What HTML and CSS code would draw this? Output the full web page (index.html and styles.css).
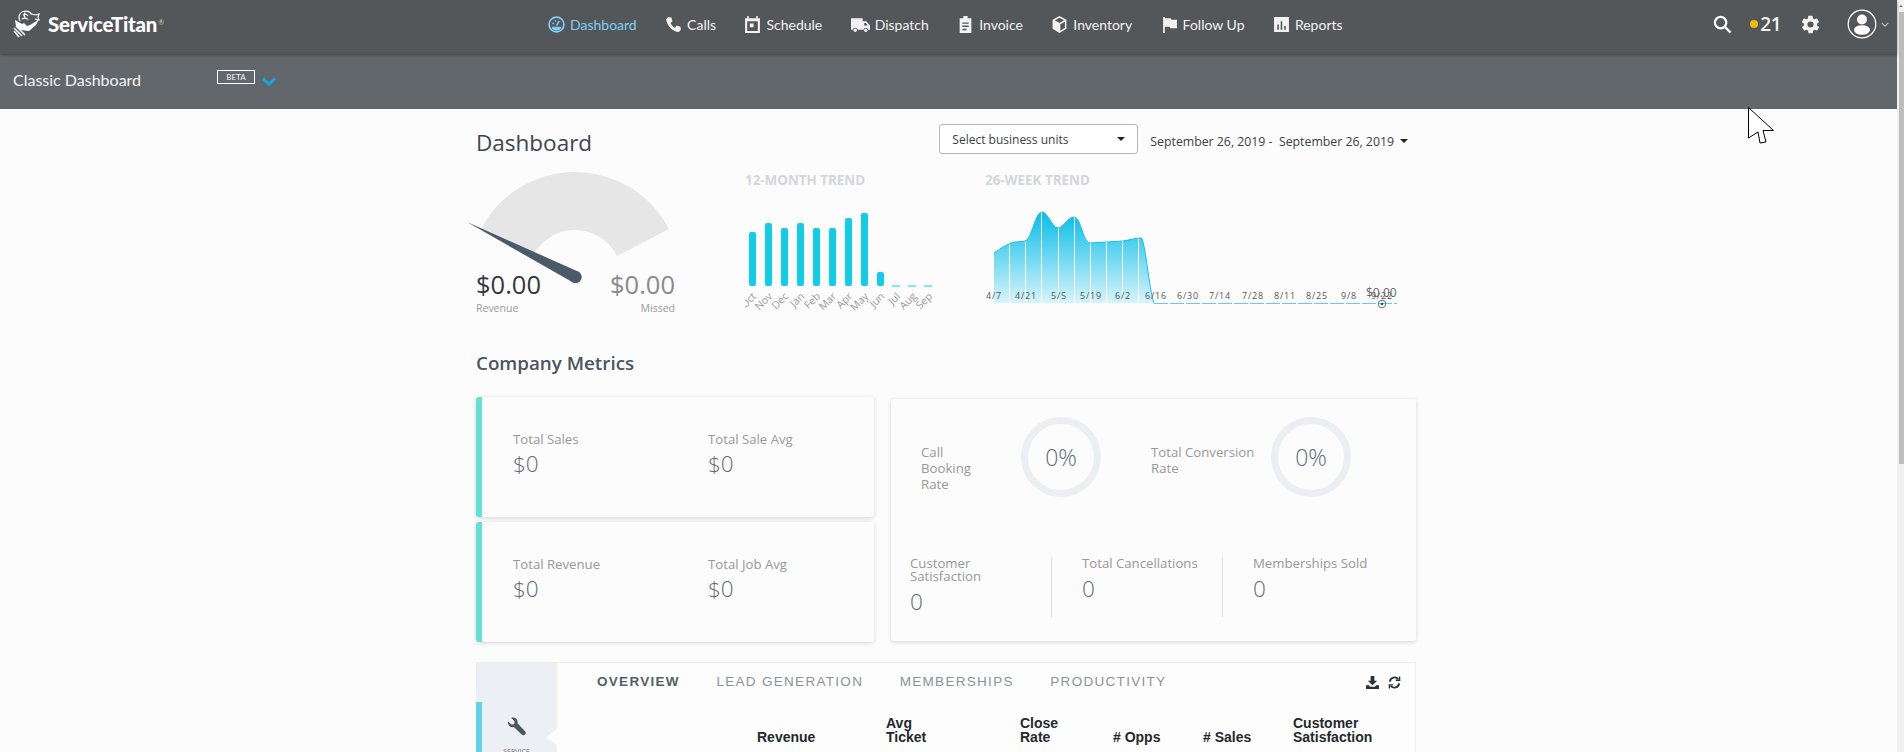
FILE: index.html
```html
<!DOCTYPE html>
<html lang="en">
<head>
<meta charset="utf-8">
<title>Dashboard</title>
<link rel="stylesheet" href="styles.css">
</head>
<body>
<div class="page">
  <header class="topbar">
    <a class="brand">
      <svg class="brand-mark" viewBox="0 0 28 28" fill="none" stroke="#fff" stroke-width="1.200">
        <path d="M7 11C5 7 6 3 10 1.500c4-1 7 0 8.500 3"/>
        <path d="M10 5c2-1 4-1 5 1M9 9c2-1.500 5-1 6 1M12 2.500c-1 2-1 4 0 5"/>
        <path d="M18 4l5 1 3-1-1 3 1 3-4-1"/>
        <path d="M2 10l1 6 5 4 8 1 7-6 3-6-4 3-5 3-3 1-3-3-2 1z" fill="#fff" stroke="none"/>
        <path d="M1 18l8 8M1 21l5 6M3 16l9 9" stroke-width="1.500"/>
      </svg>
      <span class="brand-name">ServiceTitan</span><span class="brand-reg">®</span>
    </a>
    <nav class="nav">
      <a class="nav-item active"><svg class="ico" viewBox="0 0 16 16"><circle cx="8" cy="8" r="7" fill="none" stroke="currentColor" stroke-width="1.600"/><path d="M3.500 11.500A5.500 5.500 0 0 0 12.500 11.500L12 10H4z" fill="currentColor"/><path d="M8 9l2.500-4.500" stroke="currentColor" stroke-width="1.400"/><circle cx="4.800" cy="7" r=".8" fill="currentColor"/><circle cx="7" cy="4.500" r=".8" fill="currentColor"/></svg>Dashboard</a>
      <a class="nav-item"><svg class="ico" viewBox="0 0 16 16"><path d="M3 1l3 .5 1 3.500-1.700 1.500c.8 2 2.200 3.500 4.200 4.500L11 9l3.500 1 .5 3-2 2C7 15 1.500 8.500 1 3z" fill="currentColor"/></svg>Calls</a>
      <a class="nav-item"><svg class="ico" viewBox="0 0 16 16"><path fill-rule="evenodd" d="M3 0h1.500v2h7V0H13v2h2v14H1V2h2zM3 5v9h10V5zM5.500 7h3.500v3.500H5.500z" fill="currentColor"/></svg>Schedule</a>
      <a class="nav-item"><svg class="ico ico-wide" viewBox="0 0 18 16"><path fill-rule="evenodd" d="M0 2h11v3h3.500L18 9v4h-1.700a2.300 2.300 0 0 0-4.500 0H6.200a2.300 2.300 0 0 0-4.500 0H0zM12.500 6.500V9h3.500l-2-2.500z" fill="currentColor"/><circle cx="4" cy="13.500" r="1.600" fill="currentColor"/><circle cx="14" cy="13.500" r="1.600" fill="currentColor"/></svg>Dispatch</a>
      <a class="nav-item"><svg class="ico" viewBox="0 0 16 16"><path fill-rule="evenodd" d="M6 0h4v2h3.500v14h-11V2H6zM5 6v1.300h6V6zM5 9v1.300h6V9zM5 12v1.300h4V12z" fill="currentColor"/></svg>Invoice</a>
      <a class="nav-item"><svg class="ico" viewBox="0 0 16 16"><path fill-rule="evenodd" d="M8 0l6.500 3.500v8.500L8 16l-6.500-4V3.500zM8 1.700L3.700 4 8 6.500 12.300 4zM8.800 7.800v6l4.300-2.700V5.300z" fill="currentColor"/></svg>Inventory</a>
      <a class="nav-item"><svg class="ico" viewBox="0 0 16 16"><path d="M2 1h1.600v1H9l1 1.500h5v8H9l-1-1.500H3.600V16H2z" fill="currentColor"/></svg>Follow Up</a>
      <a class="nav-item"><svg class="ico" viewBox="0 0 16 16"><path fill-rule="evenodd" d="M1 1h14v14H1zM4 8v5h1.500V8zM7.200 5v8h1.500V5zM10.500 9.500V13H12V9.500z" fill="currentColor"/></svg>Reports</a>
    </nav>
    <div class="tools">
      <svg class="tool-search" viewBox="0 0 20 20" fill="none" stroke="#fff" stroke-width="2.400"><circle cx="8" cy="8" r="6"/><path d="M12.500 12.500L18.500 18.500"/></svg>
      <span class="badge"><i class="badge-dot"></i>21</span>
      <svg class="tool-gear" viewBox="0 0 24 24"><path fill="#f2f2f2" d="M19.400 13c.1-.3.100-.7.100-1s0-.7-.1-1l2.100-1.600c.2-.2.200-.4.100-.6l-2-3.500c-.1-.2-.4-.3-.6-.2l-2.500 1c-.5-.4-1.100-.7-1.700-1l-.4-2.600c0-.3-.2-.5-.5-.5h-4c-.3 0-.5.200-.5.500l-.4 2.600c-.6.300-1.200.6-1.700 1l-2.500-1c-.2-.1-.5 0-.6.200l-2 3.500c-.1.200-.1.400.1.600L4.600 11c-.1.300-.1.700-.1 1s0 .7.1 1l-2.100 1.600c-.2.200-.2.400-.1.600l2 3.500c.1.200.4.300.6.200l2.500-1c.5.400 1.100.7 1.700 1l.4 2.600c0 .3.200.5.500.5h4c.3 0 .5-.2.500-.5l.4-2.600c.6-.3 1.200-.6 1.700-1l2.500 1c.2.100.5 0 .6-.2l2-3.500c.1-.2.100-.4-.1-.6zM12 15.500a3.500 3.500 0 1 1 0-7 3.500 3.500 0 0 1 0 7z"/></svg>
      <svg class="tool-avatar" viewBox="0 0 30 30"><circle cx="15" cy="15" r="13.800" fill="none" stroke="#fff" stroke-width="1.200"/><circle cx="15" cy="10.500" r="5" fill="#fff"/><ellipse cx="15" cy="21" rx="8" ry="4.800" fill="#fff"/></svg>
      <svg class="tool-caret" viewBox="0 0 10 6" fill="none" stroke="#b9bcbf" stroke-width="1.500"><path d="M1 1l4 4 4-4"/></svg>
    </div>
  </header>

  <div class="subbar">
    <span class="subbar-title">Classic Dashboard</span>
    <span class="beta">BETA</span>
    <svg class="subbar-chevron" viewBox="0 0 14 9" fill="none" stroke="#0aaee4" stroke-width="3"><path d="M1 1.500l6 5.500 6-5.500"/></svg>
  </div>

  <main class="content">
    <div class="title-row">
      <h1 class="title">Dashboard</h1>
      <div class="filters">
        <div class="select"><span>Select business units</span><i class="caret"></i></div>
        <div class="daterange"><span>September 26, 2019 -&nbsp; September 26, 2019</span><i class="caret"></i></div>
      </div>
    </div>

    <section class="overview">
      <div class="gauge">
        <svg class="gauge-svg" viewBox="465 165 214 125">
          <path d="M481 230A106 106 0 0 1 669 230L617 257A47 47 0 0 0 533 257Z" fill="#e6e6e6"/>
          <path d="M467 223L578 272.500A6 6 0 0 1 573 283.500Z" fill="#4b5a69"/>
          <circle cx="575.500" cy="278" r="6" fill="#4b5a69"/>
        </svg>
        <div class="gauge-values">
          <div class="gauge-value"><b>$0.00</b><small>Revenue</small></div>
          <div class="gauge-value missed"><b>$0.00</b><small>Missed</small></div>
        </div>
      </div>

      <div class="trend trend-month">
        <h3 class="trend-title">12-MONTH TREND</h3>
        <svg class="trend-svg month-svg" viewBox="745 196 200 124">
          <g fill="#12cde8">
            <rect x="749" y="232" width="7" height="54" rx="2"/>
            <rect x="765" y="223" width="7" height="63" rx="2"/>
            <rect x="781" y="228" width="7" height="58" rx="2"/>
            <rect x="797" y="223" width="7" height="63" rx="2"/>
            <rect x="813" y="228" width="7" height="58" rx="2"/>
            <rect x="829" y="228" width="7" height="58" rx="2"/>
            <rect x="845" y="218" width="7" height="68" rx="2"/>
            <rect x="861" y="213" width="7" height="73" rx="2"/>
            <rect x="877" y="272" width="7" height="14" rx="2"/>
            <rect x="892" y="285.500" width="8" height="1"/>
            <rect x="908" y="285.500" width="8" height="1"/>
            <rect x="924" y="285.500" width="8" height="1"/>
          </g>
          <g class="month-labels">
            <text transform="translate(757 297) rotate(-45)">Oct</text>
            <text transform="translate(773 297) rotate(-45)">Nov</text>
            <text transform="translate(789 297) rotate(-45)">Dec</text>
            <text transform="translate(805 297) rotate(-45)">Jan</text>
            <text transform="translate(821 297) rotate(-45)">Feb</text>
            <text transform="translate(837 297) rotate(-45)">Mar</text>
            <text transform="translate(853 297) rotate(-45)">Apr</text>
            <text transform="translate(869 297) rotate(-45)">May</text>
            <text transform="translate(885 297) rotate(-45)">Jun</text>
            <text transform="translate(901 297) rotate(-45)">Jul</text>
            <text transform="translate(917 297) rotate(-45)">Aug</text>
            <text transform="translate(933 297) rotate(-45)">Sep</text>
          </g>
        </svg>
      </div>

      <div class="trend trend-week">
        <h3 class="trend-title">26-WEEK TREND</h3>
        <svg class="trend-svg week-svg" viewBox="985 196 431 124">
          <defs>
            <linearGradient id="areaFill" x1="0" y1="0" x2="0" y2="1">
              <stop offset="0" stop-color="#08bde8"/>
              <stop offset="1" stop-color="#d6f4fb"/>
            </linearGradient>
          </defs>
          <path d="M994 253C1000 249 1004 246 1009 244C1015 241 1020 242 1025 241C1032 239 1035 212 1042 212C1048 212 1052 228 1058 228C1063 228 1068 217 1074 217C1081 217 1083 243 1090 243L1107 242L1123 241C1130 240 1135 238 1141 238C1145 238 1149 290 1154 303L994 303Z" fill="url(#areaFill)"/>
          <path d="M994 253C1000 249 1004 246 1009 244C1015 241 1020 242 1025 241C1032 239 1035 212 1042 212C1048 212 1052 228 1058 228C1063 228 1068 217 1074 217C1081 217 1083 243 1090 243L1107 242L1123 241C1130 240 1135 238 1141 238C1145 238 1149 290 1154 303" fill="none" stroke="#16bfe6" stroke-width="1"/>
          <path d="M1154 303.500H1397" fill="none" stroke="#5fd0ec" stroke-width="1" stroke-dasharray="14 2"/>
          <g stroke="#fff" stroke-width="1">
            <path d="M1009.500 244V303M1025.500 241V303M1041.500 212V303M1058.500 228V303M1074.500 217V303M1090.500 243V303M1106.500 242V303M1122.500 241V303M1138.500 238V303"/>
          </g>
          <g class="week-labels">
            <text x="994" y="299">4/7</text>
            <text x="1026" y="299">4/21</text>
            <text x="1059" y="299">5/5</text>
            <text x="1091" y="299">5/19</text>
            <text x="1123" y="299">6/2</text>
            <text x="1156" y="299">6/16</text>
            <text x="1188" y="299">6/30</text>
            <text x="1220" y="299">7/14</text>
            <text x="1253" y="299">7/28</text>
            <text x="1285" y="299">8/11</text>
            <text x="1317" y="299">8/25</text>
            <text x="1349" y="299">9/8</text>
            <text x="1382" y="299">9/22</text>
          </g>
          <text class="week-current" x="1366" y="297">$0.00</text>
          <circle cx="1382" cy="304" r="3.800" fill="none" stroke="#5e7180" stroke-width="1"/>
          <circle cx="1382" cy="304" r="1.200" fill="#33414c"/>
        </svg>
      </div>
    </section>

    <h2 class="section-title">Company Metrics</h2>

    <section class="metrics">
      <div class="metric-stack">
        <div class="card metric-card">
          <div class="metric"><span class="metric-label">Total Sales</span><span class="metric-value">$0</span></div>
          <div class="metric"><span class="metric-label">Total Sale Avg</span><span class="metric-value">$0</span></div>
        </div>
        <div class="card metric-card">
          <div class="metric"><span class="metric-label">Total Revenue</span><span class="metric-value">$0</span></div>
          <div class="metric"><span class="metric-label">Total Job Avg</span><span class="metric-value">$0</span></div>
        </div>
      </div>
      <div class="card rates-card">
        <div class="rates">
          <span class="metric-label rate-label rate-a">Call<br>Booking<br>Rate</span>
          <div class="ring">0%</div>
          <span class="metric-label rate-label rate-b">Total Conversion<br>Rate</span>
          <div class="ring">0%</div>
        </div>
        <div class="counts">
          <div class="count count-first"><span class="metric-label tight">Customer<br>Satisfaction</span><span class="metric-value">0</span></div>
          <div class="count"><span class="metric-label tight">Total Cancellations</span><span class="metric-value">0</span></div>
          <div class="count count-last"><span class="metric-label tight">Memberships Sold</span><span class="metric-value">0</span></div>
        </div>
      </div>
    </section>

    <section class="panel">
      <aside class="rail">
        <div class="rail-item">
          <svg class="rail-icon" viewBox="0 0 20 20"><path fill="#4a5662" d="M1 4.500L4.500 8l3-.5.5-3L4.500 1C7 0 10 1 11 4c.3 1 .2 2 0 2.700L19 15c1 1 1 2.500 0 3.500s-2.500 1-3.500 0L7.200 10.500C4 11.500.5 9 1 4.500z"/></svg>
          <span class="rail-label">SERVICE</span>
          <i class="rail-notch"></i>
        </div>
      </aside>
      <div class="panel-body">
        <div class="tab-row">
          <div class="tabs">
            <a class="tab on">OVERVIEW</a>
            <a class="tab">LEAD GENERATION</a>
            <a class="tab">MEMBERSHIPS</a>
            <a class="tab">PRODUCTIVITY</a>
          </div>
          <div class="tab-tools">
            <svg class="tab-tool" viewBox="0 0 14 14"><path fill="#2b3238" d="M5 0h4v5h3L7 10 2 5h3zM0 10h3l1.500 1.500h5L11 10h3v4H0z"/></svg>
            <svg class="tab-tool" viewBox="0 0 14 14" fill="none" stroke="#2b3238" stroke-width="2"><path d="M2 6a5 5 0 0 1 9-2.500M12 8a5 5 0 0 1-9 2.500"/><path d="M12.500 0.500v4h-4M1.500 13.500v-4h4" stroke-width="1.500"/></svg>
          </div>
        </div>
        <div class="thead">
          <span>Revenue</span>
          <span>Avg<br>Ticket</span>
          <span>Close<br>Rate</span>
          <span># Opps</span>
          <span># Sales</span>
          <span>Customer<br>Satisfaction</span>
        </div>
      </div>
    </section>
  </main>

  <div class="scrollbar"><i class="scrollbar-arrow"></i><i class="scrollbar-thumb"></i></div>
  <svg class="cursor" viewBox="0 0 28 38"><path d="M.5 .5V31L10 25 12 36 18 35 15 23.500H25.500Z" fill="#fff" stroke="#000" stroke-width="1"/></svg>
</div>
</body>
</html>
```

FILE: styles.css
```css
* { box-sizing: border-box; }
html, body { margin: 0; height: 100%; overflow: hidden; }
body { font-family: "Open Sans", "Liberation Sans", sans-serif; color: #333; background: #fcfcfd; }
.page { position: relative; width: 1904px; height: 752px; overflow: hidden; padding-right: 7px; }

/* top bar */
.topbar { height: 54px; background: #54575a; display: flex; align-items: center; padding: 0 0 6px 13px; position: relative; box-shadow: 0 1px 3px rgba(0,0,0,.35); z-index: 2; font-family: Lato, sans-serif; }
.brand { display: flex; align-items: center; width: 535px; color: #fff; }
.brand-mark { width: 28px; height: 28px; margin-right: 7px; }
.brand-name { font-weight: 900; font-size: 20.400px; letter-spacing: -.2px; }
.brand-reg { font-size: 7px; align-self: flex-start; margin: 8px 0 0 1px; color: #ccc; }
.nav { display: flex; align-items: center; gap: 28.400px; }
.nav-item { display: flex; align-items: center; gap: 5px; color: #f2f2f2; font-size: 14px; }
.nav-item.active { color: #7fd0f2; }
.ico { width: 17px; height: 17px; flex: none; }
.ico-wide { width: 19px; }
.tools { margin-left: auto; display: flex; align-items: center; padding-right: 8px; }
.tool-search { width: 19px; height: 19px; }
.badge { display: flex; align-items: center; margin-left: 18px; color: #f2f2f2; font: 600 19px "Open Sans", sans-serif; letter-spacing: -.5px; }
.badge-dot { width: 8px; height: 8px; border-radius: 50%; background: #f0b90b; margin-right: 2px; }
.tool-gear { width: 21px; height: 21px; margin-left: 19px; }
.tool-avatar { width: 30px; height: 30px; margin-left: 26px; }
.tool-caret { width: 8px; height: 5px; margin-left: 4px; }

/* sub bar */
.subbar { height: 55px; background: #62676c; display: flex; align-items: center; padding: 0 0 4px 13px; color: #f4f4f4; }
.subbar-title { font: 400 16px Lato, sans-serif; width: 204px; }
.beta { border: 1px solid #fff; font: 400 8px/12px Lato, sans-serif; width: 38px; height: 14px; text-align: center; margin-top: -6px; }
.subbar-chevron { width: 14px; height: 9px; margin: 3px 0 0 7px; }

/* content */
.content { width: 945px; margin: 0 auto; }
.title-row { display: flex; justify-content: space-between; align-items: center; height: 30px; margin-top: 15px; padding-right: 13px; }
.title { margin: 6px 0 0; font-weight: 400; font-size: 22.500px; color: #3c4650; }
.filters { display: flex; align-items: center; }
.select { width: 199px; height: 30px; background: #fff; border: 1px solid #b5b5b5; border-radius: 3px; display: flex; align-items: center; justify-content: space-between; padding: 0 12px; font-size: 12px; color: #3a3f44; }
.caret { width: 0; height: 0; border: 4px solid transparent; border-top-color: #222; border-bottom: 0; display: block; }
.daterange { display: flex; align-items: center; margin: 4px 0 0 12px; font-size: 12.300px; color: #3a3f44; }
.daterange .caret { margin-left: 6px; }

.overview { display: flex; height: 180px; margin-top: 11px; }
.gauge { width: 269px; position: relative; }
.gauge-svg { display: block; width: 214px; height: 125px; margin-left: -11px; margin-top: -1px; }
.gauge-values { position: absolute; left: 0; top: 102px; width: 199px; display: flex; justify-content: space-between; }
.gauge-value { display: flex; flex-direction: column; }
.gauge-value b { font-weight: 400; font-size: 25.500px; line-height: 34px; color: #33383d; }
.gauge-value small { font-size: 10.500px; line-height: 14px; color: #9a9a9a; }
.missed { text-align: right; }
.missed b { color: #8a8a8a; }
.trend-title { margin: 0; font-size: 13.400px; font-weight: 700; line-height: 18px; height: 31px; padding-top: 6px; color: #d1d7db; }
.trend-svg { display: block; height: 124px; }
.trend-month { width: 240px; }
.month-svg { width: 200px; }
.month-labels text { font: 400 10.500px "Open Sans", sans-serif; fill: #9a9a9a; text-anchor: end; }
.trend-week { flex: 1; }
.week-svg { width: 431px; }
.week-labels text { font: 400 9px "Open Sans", sans-serif; fill: #555; text-anchor: middle; letter-spacing: .8px; }
.week-current { font: 400 12px "Open Sans", sans-serif; fill: #666; }

.section-title { margin: 6px 0 0; font-size: 18.800px; font-weight: 600; line-height: 24px; color: #4a5560; }

.metrics { display: flex; gap: 17px; margin-top: 22px; width: 940px; }
.metric-stack { width: 398px; display: flex; flex-direction: column; gap: 5px; }
.card { background: #fcfcfc; box-shadow: 0 1px 4px rgba(0,0,0,.16); border-radius: 3px; }
.metric-card { height: 120px; border-left: 6px solid #62e2d6; display: flex; padding: 33px 0 0 31px; }
.metric { width: 195px; flex: none; display: flex; flex-direction: column; }
.metric-label { font-size: 13.200px; line-height: 18px; color: #989898; font-weight: 400; }
.metric-value { font-size: 22.500px; font-weight: 300; line-height: 28px; color: #5d6b76; margin-top: 2px; }
.rates-card { width: 525px; height: 242px; margin-top: 2px; padding-top: 18px; flex: none; }
.rates { display: flex; padding-left: 30px; height: 80px; }
.rate-label { display: block; line-height: 16px; margin-top: 27px; }
.rate-a { width: 100px; }
.rate-b { width: 120px; margin-left: 50px; }
.ring { width: 80px; height: 80px; border-radius: 50%; border: 7px solid #ebeff3; display: flex; align-items: center; justify-content: center; font-size: 23px; font-weight: 300; color: #5d6b76; }
.counts { display: flex; margin-top: 60px; padding-left: 19px; height: 60px; }
.count { width: 171px; padding-left: 30px; border-right: 1px solid #e2e2e2; display: flex; flex-direction: column; }
.count-first { width: 142px; padding-left: 0; }
.count-last { border-right: 0; }
.tight { line-height: 13px; }
.count .metric-value { margin-top: 5px; }

.panel { display: flex; margin-top: 20px; width: 940px; height: 300px; border: 1px solid #eee; border-left: 0; background: #fdfdfd; }
.rail { width: 81px; background: #eceff3; padding-top: 39px; flex: none; }
.rail-item { height: 90px; border-left: 6px solid #62d3e6; position: relative; display: flex; flex-direction: column; align-items: center; padding: 15px 6px 0 0; }
.rail-icon { width: 19px; height: 19px; }
.rail-label { font-size: 7px; line-height: 8px; margin-top: 12px; color: #777; }
.rail-notch { position: absolute; right: 0; top: 27px; border: 8px solid transparent; border-right: 11px solid #fdfdfd; border-left: 0; }
.panel-body { flex: 1; font-family: "Liberation Sans", Arial, sans-serif; }
.tab-row { display: flex; justify-content: space-between; padding: 11px 14px 0 40px; }
.tabs { display: flex; gap: 36.500px; }
.tab { font-size: 13.500px; line-height: 16px; letter-spacing: 1.300px; color: #8a9299; }
.tab.on { font-weight: 700; color: #555f68; }
.tab-tools { display: flex; gap: 9px; align-items: center; }
.tab-tool { width: 13px; height: 13px; }
.thead { display: grid; grid-template-columns: 129px 134px 93px 90px 90px 1fr; align-items: end; margin-top: 26px; padding-left: 200px; font-size: 14px; font-weight: 700; line-height: 14px; color: #24292e; }

/* window chrome over the page */
.scrollbar { position: absolute; top: 0; right: 0; width: 7px; height: 752px; background: #f1f1f1; padding-left: 2px; }
.scrollbar-arrow { display: block; width: 0; height: 0; margin: 5px 0 5px 0; border: 2.500px solid transparent; border-bottom-color: #777; border-top: 0; }
.scrollbar-thumb { display: block; width: 5px; height: 452px; background: #bdbdbd; }
.cursor { position: absolute; left: 1748px; top: 107px; width: 28px; height: 38px; z-index: 5; }
```
